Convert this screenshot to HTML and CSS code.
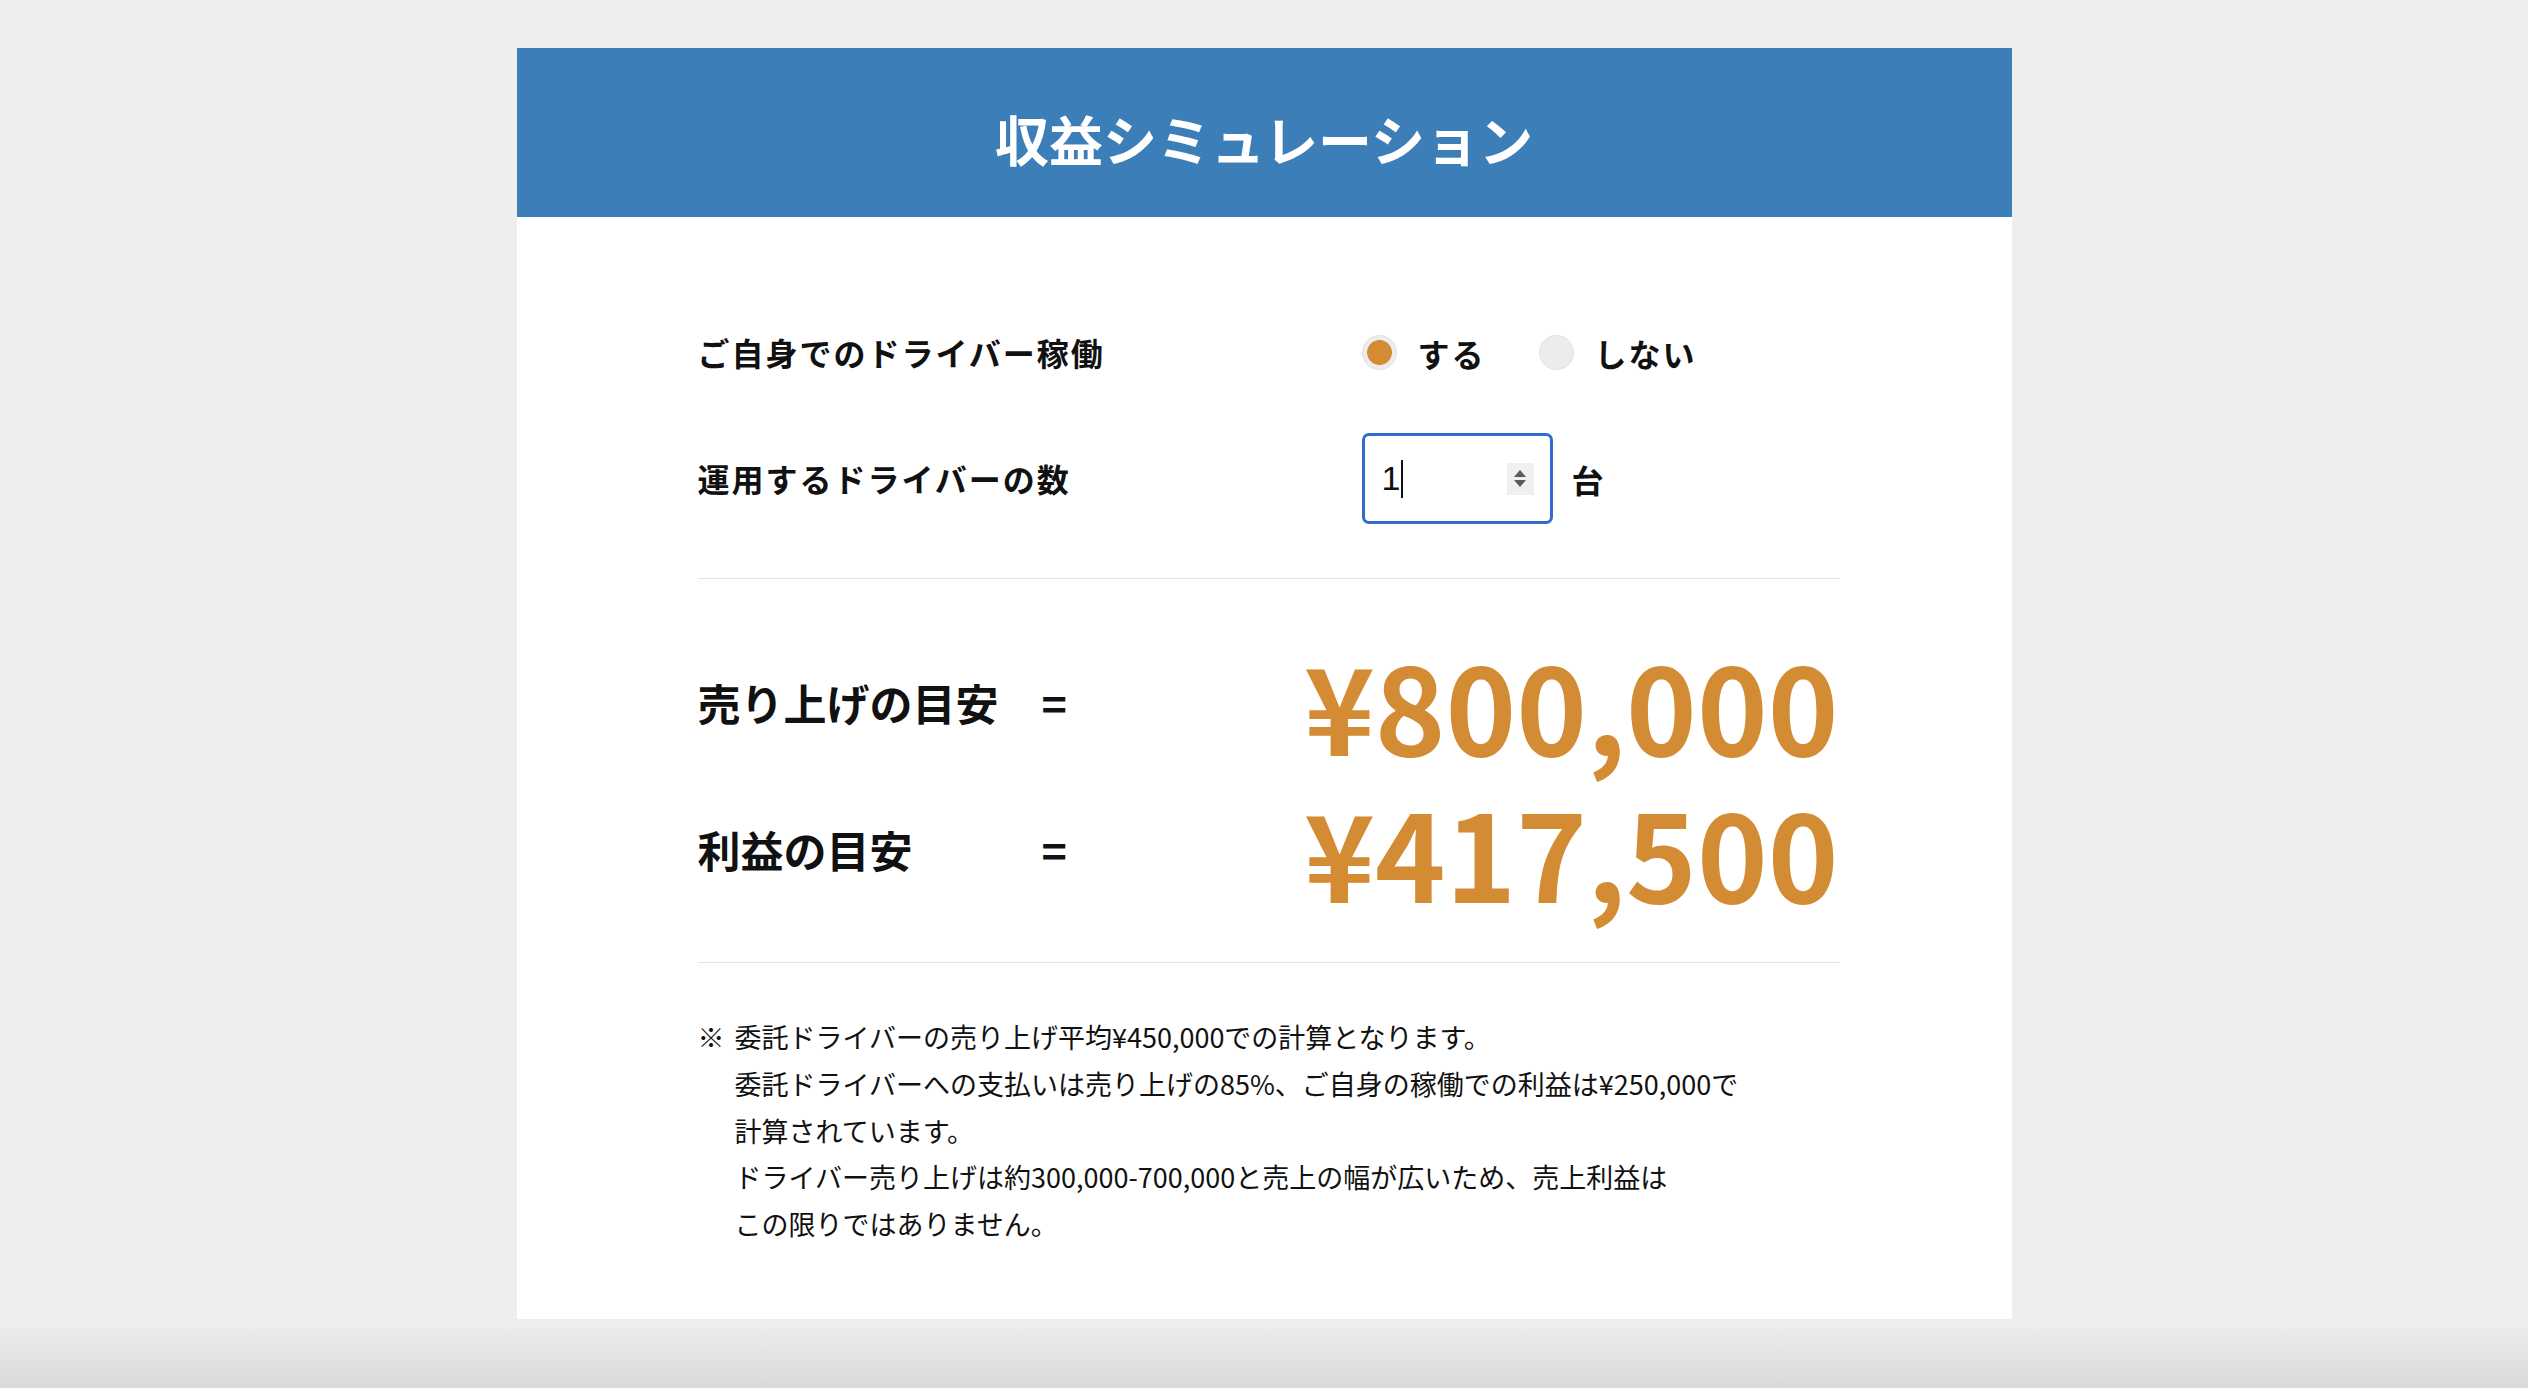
FILE: index.html
```html
<!DOCTYPE html>
<html lang="ja">
<head>
<meta charset="utf-8">
<title>収益シミュレーション</title>
<link rel="stylesheet" href="styles.css">
</head>
<body>
<main class="sim">
  <header class="sim-head">
    <h1 class="sim-title">収益シミュレーション</h1>
  </header>

  <div class="sim-body">
    <section class="inputs">
      <div class="field">
        <div class="field-label">ご自身でのドライバー稼働</div>
        <div class="field-ctrl">
          <label class="choice"><input type="radio" name="self" checked><span>する</span></label>
          <label class="choice"><input type="radio" name="self"><span>しない</span></label>
        </div>
      </div>
      <div class="field">
        <div class="field-label">運用するドライバーの数</div>
        <div class="field-ctrl">
          <div class="num-field">
            <span class="num-value">1</span><span class="caret"></span>
            <span class="spinner"><i class="up"></i><i class="down"></i></span>
          </div>
          <span class="unit">台</span>
        </div>
      </div>
    </section>

    <hr class="rule">

    <section class="results">
      <div class="result">
        <div class="result-label">売り上げの目安</div>
        <div class="result-eq">=</div>
        <div class="result-value">¥800,000</div>
      </div>
      <div class="result">
        <div class="result-label">利益の目安</div>
        <div class="result-eq">=</div>
        <div class="result-value">¥417,500</div>
      </div>
    </section>

    <hr class="rule">

    <section class="notes">
      <span class="note-mark">※</span>
      <p class="note-text">委託ドライバーの売り上げ平均¥450,000での計算となります。<br>委託ドライバーへの支払いは売り上げの85%、ご自身の稼働での利益は¥250,000で<br>計算されています。<br>ドライバー売り上げは約300,000-700,000と売上の幅が広いため、売上利益は<br>この限りではありません。</p>
    </section>
  </div>
</main>
</body>
</html>
```

FILE: styles.css
```css
* { box-sizing: border-box; }

html, body {
  margin: 0;
  min-height: 1388px;
}

body {
  padding-top: 48px;
  background: linear-gradient(to bottom, #eeeeee 0, #eeeeee 1322px, #d9d9d9 1388px);
  font-family: "Noto Sans CJK JP", "Noto Sans", sans-serif;
  color: #111;
}

.sim {
  width: 1495px;
  margin: 0 auto;
  background: #fff;
}

.sim-head {
  height: 169px;
  background: #3b7eb8;
  display: flex;
  align-items: center;
  justify-content: center;
}

.sim-title {
  margin: 0;
  color: #fff;
  font-size: 54px;
  font-weight: 700;
  line-height: 1;
  transform: translateY(6px);
}

.sim-body {
  width: 1142px;
  margin-left: 181px;
  padding: 90px 0 71px;
}

/* form rows */
.inputs {
  display: flex;
  flex-direction: column;
  gap: 35px;
}

.field {
  display: grid;
  grid-template-columns: 664px 1fr;
  align-items: center;
  min-height: 91px;
}

.field-label {
  font-size: 32px;
  font-weight: 700;
  letter-spacing: 2px;
  transform: translateY(-1px);
}

.field-ctrl {
  display: flex;
  align-items: center;
}

.choice {
  display: flex;
  align-items: center;
  gap: 21px;
  margin-right: 53px;
  font-size: 32px;
  font-weight: 700;
  letter-spacing: 2px;
}

.choice input {
  appearance: none;
  -webkit-appearance: none;
  margin: 0;
  width: 35px;
  height: 35px;
  border-radius: 50%;
  background: #ececec;
  border: 1px solid #e2e2e2;
}

.choice input:checked {
  background: radial-gradient(circle, #d38b34 0 12px, #ececec 12.8px);
}

.num-field {
  width: 191px;
  height: 91px;
  border: 3px solid #2f6bd3;
  border-radius: 7px;
  display: flex;
  align-items: center;
  padding: 0 16px 0 17px;
}

.num-value {
  font-family: "Liberation Sans", Arial, sans-serif;
  font-size: 34px;
  color: #111;
}

.caret {
  width: 2px;
  height: 38px;
  margin-left: 1px;
  background: #111;
}

.spinner {
  margin-left: auto;
  width: 27px;
  height: 32px;
  background: #efefef;
  display: flex;
  flex-direction: column;
  align-items: center;
  justify-content: center;
  gap: 3px;
}

.spinner i {
  width: 0;
  height: 0;
  border-left: 6px solid transparent;
  border-right: 6px solid transparent;
}

.spinner .up { border-bottom: 7px solid #5a5a5a; }
.spinner .down { border-top: 7px solid #5a5a5a; }

.unit {
  margin-left: 19px;
  font-size: 32px;
  font-weight: 700;
}

.rule {
  margin: 0;
  border: 0;
  height: 1px;
  background: #e2e2e2;
}

.inputs + .rule { margin-top: 54px; }

/* estimates */
.results {
  padding: 49px 0 40px;
}

.result {
  display: grid;
  grid-template-columns: 344px 30px 1fr;
  align-items: center;
  height: 147px;
}

.result-label {
  font-size: 43px;
  font-weight: 700;
}

.result-eq {
  font-size: 43px;
  font-weight: 700;
}

.result-value {
  text-align: right;
  font-size: 120px;
  font-weight: 700;
  line-height: 147px;
  color: #d38b34;
  margin-right: 1px;
  transform: translateY(3px);
}

/* footnote */
.notes {
  display: flex;
  padding-top: 51px;
  font-size: 27px;
  line-height: 46.8px;
  color: #111;
}

.note-mark {
  flex: 0 0 37px;
}

.note-text {
  margin: 0;
}
```
